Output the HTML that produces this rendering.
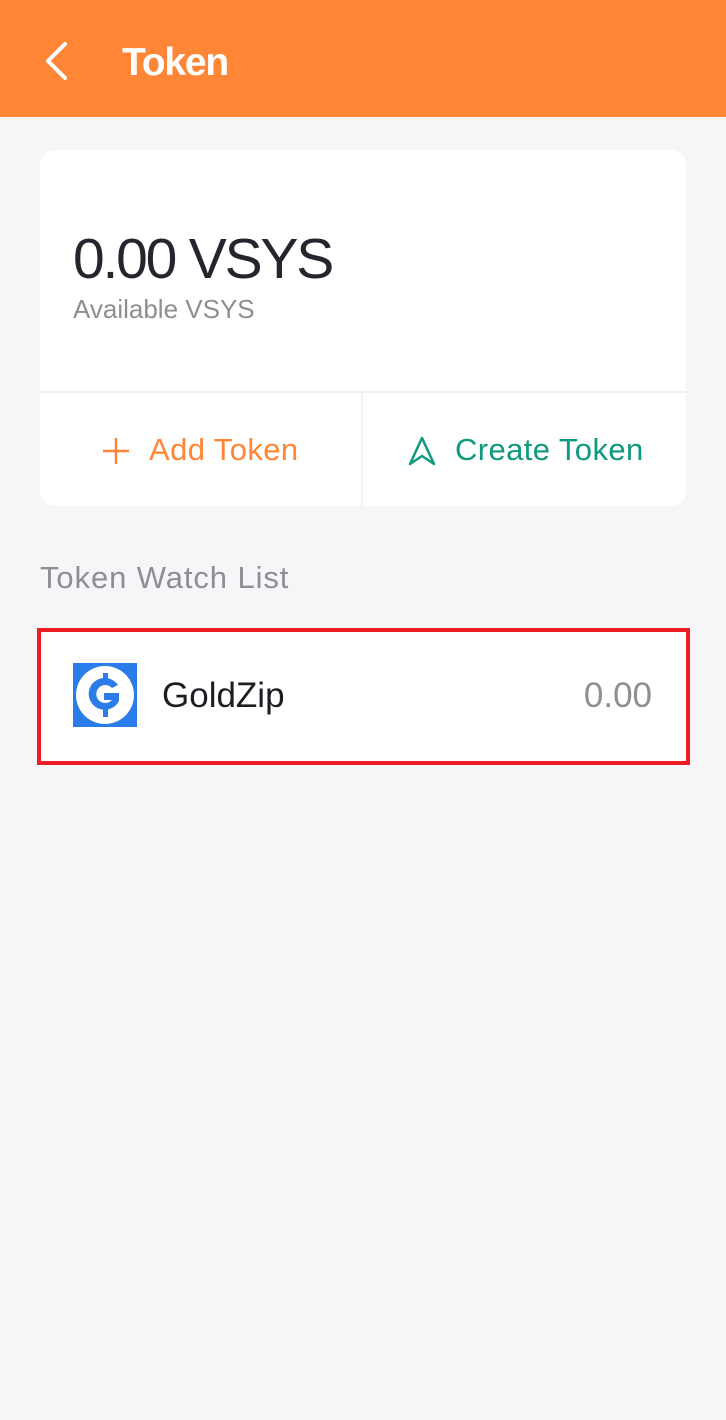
<!DOCTYPE html>
<html><head><meta charset="utf-8"><style>
*{margin:0;padding:0;box-sizing:border-box}
body{width:726px;height:1420px;background:#f6f6f8;font-family:"Liberation Sans",Arial,sans-serif;position:relative;overflow:hidden}
.hdr{position:absolute;left:0;top:0;width:726px;height:117px;background:#ff8636}
.title{position:absolute;left:122px;top:40px;color:#fff;font-size:39px;font-weight:bold;line-height:46px;letter-spacing:-1.2px}
.card{position:absolute;left:40px;top:150px;width:646px;height:356px;background:#fff;border-radius:14px;overflow:hidden}
.amt{position:absolute;left:33px;top:76px;font-size:57px;color:#25262d;line-height:66px;letter-spacing:-2.2px}
.avail{position:absolute;left:33px;top:143px;font-size:26px;color:#8e8e93;line-height:32px}
.hl{position:absolute;left:0;top:241px;width:646px;height:2px;background:#f0f0f2}
.vl{position:absolute;left:321px;top:243px;width:2px;height:113px;background:#f0f0f2}
.btn{position:absolute;top:281px;font-size:31px;line-height:38px;letter-spacing:0.4px}
.sec{position:absolute;left:40px;top:560px;font-size:31px;color:#8e8e93;line-height:36px;letter-spacing:0.9px}
.item{position:absolute;left:37px;top:628px;width:653px;height:137px;background:#fff;border:4px solid #ee1c25}
.gz{position:absolute;left:162px;top:675px;font-size:35px;color:#1c1c22;line-height:42px}
.val{position:absolute;right:74px;top:675px;font-size:35px;color:#8e8e93;line-height:42px}
</style></head><body>
<div class="hdr">
<svg style="position:absolute;left:40px;top:40px" width="30" height="42" viewBox="0 0 30 42"><path d="M25 4 L8 21 L25 38" fill="none" stroke="#fff" stroke-width="4" stroke-linecap="round" stroke-linejoin="round"/></svg>
<div class="title">Token</div>
</div>
<div class="card">
<div class="amt">0.00 VSYS</div>
<div class="avail">Available VSYS</div>
<div class="hl"></div><div class="vl"></div>
<svg style="position:absolute;left:61px;top:286px" width="30" height="30" viewBox="0 0 30 30"><path d="M15 2V28M2 15H28" stroke="#ff8636" stroke-width="2.5"/></svg>
<div class="btn" style="left:109px;color:#ff8636">Add Token</div>
<svg style="position:absolute;left:367px;top:285px" width="30" height="32" viewBox="0 0 30 32"><path d="M15 3 L27 29 L15 21 L3 29 Z" fill="none" stroke="#0f9a80" stroke-width="2.5" stroke-linejoin="round"/></svg>
<div class="btn" style="left:415px;color:#0f9a80">Create Token</div>
</div>
<div class="sec">Token Watch List</div>
<div class="item"></div>
<svg style="position:absolute;left:73px;top:663px" width="64" height="64" viewBox="0 0 64 64"><rect width="64" height="64" fill="#2a7de9"/><circle cx="32" cy="32" r="29" fill="#fff"/><path d="M45 22 A16 16 0 1 0 46 38 L46 30 L31 30 L31 37 L39 37 A9 9 0 1 1 39 25 Z" fill="#2a7de9"/><rect x="30" y="10" width="5" height="8" fill="#2a7de9"/><rect x="30" y="46" width="5" height="8" fill="#2a7de9"/></svg>
<div class="gz">GoldZip</div>
<div class="val">0.00</div>
</body></html>
